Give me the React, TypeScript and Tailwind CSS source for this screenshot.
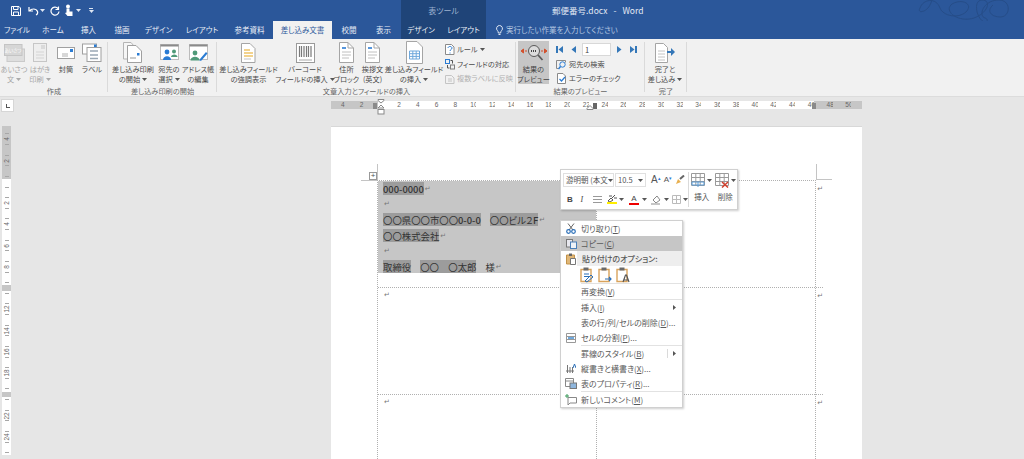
import type { ReactNode } from "react"

const FONT = "font-['Noto_Sans_CJK_JP','Noto_Sans',sans-serif] [font-feature-settings:'palt']"

function Svg({ w, h, children }: { w: number; h: number; children: ReactNode }) {
  return (
    <svg width={w} height={h} viewBox={`0 0 ${w} ${h}`} fill="none" className="shrink-0">
      {children}
    </svg>
  )
}

function Caret({ color = "#555" }: { color?: string }) {
  return (
    <svg width="5" height="3" viewBox="0 0 5 3" className="shrink-0">
      <path d="M0 0h5L2.5 3z" fill={color} />
    </svg>
  )
}

function DocIcon({ accent = "#2b7cd3" }: { accent?: string }) {
  return (
    <Svg w={15} h={21}>
      <path d="M.5 .5H9L14.500 6V20.500H.5z" fill="#fff" stroke="#a5a5a5" />
      <path d="M9 .5V6H14.500" stroke="#a5a5a5" />
      <path d="M3 6h4" stroke={accent} strokeWidth="1.600" />
      <path d="M3 10h9M3 13h9M3 16h7" stroke="#c0c0c0" />
    </Svg>
  )
}

const ribbonIcons: Record<string, ReactNode> = {
  greet: (
    <Svg w={21} h={18}>
      <rect x="3" y="5" width="17.500" height="12.500" fill="#dedede" stroke="#cacaca" />
      <rect x=".5" y=".5" width="17.500" height="11" fill="#d6d6d6" stroke="#c4c4c4" />
      <text x="9" y="8" textAnchor="middle" fontSize="4.500" fill="#fff">あいさつ</text>
    </Svg>
  ),
  card: (
    <Svg w={14} h={19}>
      <rect x=".5" y=".5" width="13" height="18" fill="#eeeeee" stroke="#c6c6c6" />
      <rect x="8" y="2" width="4" height="4" fill="#dadada" />
      <path d="M3 9h8M3 12h8M3 15h8" stroke="#d4d4d4" />
    </Svg>
  ),
  envelope: (
    <Svg w={18} h={12}>
      <rect x=".5" y=".5" width="17" height="11" fill="#fff" stroke="#a0a0a0" />
      <rect x="13" y="2" width="3" height="3" fill="#2b7cd3" />
      <path d="M5 7h6M5 9h6" stroke="#b0b0b0" />
    </Svg>
  ),
  label: (
    <Svg w={20} h={19}>
      <rect x=".5" y="1" width="14" height="10" fill="#fff" stroke="#a0a0a0" />
      <rect x="5" y="4.500" width="14" height="14" fill="#fff" stroke="#a0a0a0" />
      <rect x="12" y="1.500" width="2.500" height="2.500" fill="#2b7cd3" />
      <path d="M8 8h8M8 12h8M8 15.500h8" stroke="#9aa8b5" strokeWidth="1.400" />
    </Svg>
  ),
  merge: (
    <Svg w={20} h={21}>
      <path d="M.5 .5H8L11 4V17H.5z" fill="#f6f6f6" stroke="#b5b5b5" />
      <path d="M4.500 3.500H13L18.500 9V20.500H4.500z" fill="#fff" stroke="#a0a0a0" />
      <rect x="14" y="11" width="2.500" height="2.500" fill="#2b7cd3" />
      <path d="M7 16h6" stroke="#b5b5b5" strokeWidth="1.400" />
    </Svg>
  ),
  people: (
    <Svg w={19} h={17}>
      <rect x=".5" y=".5" width="18" height="15" fill="#fff" stroke="#bcbcbc" />
      <path d="M.5 1.500h18" stroke="#8a8a8a" strokeWidth="2" />
      <circle cx="7" cy="8" r="2.400" fill="#2b7cd3" />
      <path d="M3 16c0-5 8-5 8 0z" fill="#2b7cd3" />
      <circle cx="14" cy="7.500" r="2" fill="#4f9a78" />
      <path d="M11 13c0-3.500 6.500-3.500 6.500 0z" fill="#4f9a78" />
    </Svg>
  ),
  address: (
    <Svg w={19} h={17}>
      <rect x=".5" y=".5" width="18" height="15" fill="#fff" stroke="#bcbcbc" />
      <path d="M.5 1.500h18" stroke="#8a8a8a" strokeWidth="2" />
      <circle cx="6" cy="9" r="2.400" fill="#4f9a78" />
      <path d="M1.500 16.500c0-5 9-5 9 0z" fill="#4f9a78" />
      <path d="M11 15l6-7 1.500 1.500-6 7-2 .5z" fill="#2b7cd3" />
    </Svg>
  ),
  highlight: (
    <Svg w={15} h={20}>
      <path d="M.5 .5H9L14 5.500V19.500H.5z" fill="#fff" stroke="#a5a5a5" />
      <path d="M3 7h6M3 10h9M3 13h9" stroke="#eec468" strokeWidth="1.400" />
      <path d="M3 16h7" stroke="#c4c4c4" />
    </Svg>
  ),
  barcode: (
    <Svg w={19} h={20}>
      <rect x=".5" y=".5" width="18" height="19" fill="#fff" stroke="#9a9a9a" />
      <path d="M3.500 3v11M5.500 3v11M8 3v11M10.500 3v11M12.500 3v11M15 3v11" stroke="#7a7a7a" strokeWidth="1.200" />
      <path d="M3 17h13" stroke="#a8a8a8" />
    </Svg>
  ),
  block: <DocIcon />,
  greeting: <DocIcon />,
  insertField: (
    <Svg w={17} h={23}>
      <path d="M.5 .5H11L16.500 6V22.500H.5z" fill="#fff" stroke="#a5a5a5" />
      <path d="M3.500 10h10v8h-10zM3.500 12.700h10M3.500 15.400h10M6.800 10v8M10.200 10v8" stroke="#6fa8dc" />
    </Svg>
  ),
  preview: (
    <Svg w={26} h={18}>
      <path d="M0 7l2.500-2v4zM26 7l-2.500-2v4zM4 7h2M20 7h2" fill="#d2502d" stroke="#d2502d" />
      <circle cx="13" cy="7" r="5.500" fill="#dcdcdc" stroke="#5a5a5a" />
      <path d="M10 7h6" stroke="#444" strokeDasharray="1 1" strokeWidth="2" />
      <path d="M17 11l4.500 5" stroke="#5a5a5a" strokeWidth="1.800" />
    </Svg>
  ),
  finish: (
    <Svg w={20} h={20}>
      <path d="M.5 .5H8.500L12.500 4.500V19.500H.5z" fill="#fff" stroke="#a5a5a5" />
      <path d="M3 8h7M3 11h7M3 14h7M3 17h7" stroke="#c4c4c4" />
      <path d="M12 8h4V5l4 4-4 4v-3h-4z" fill="#3477b8" />
    </Svg>
  ),
}

function RibbonButton({ icon, lines, width, caret, disabled, ml }: { icon: string; lines: string[]; width: string; caret?: boolean; disabled?: boolean; ml?: string }) {
  const text = disabled ? "text-[#a8a8a8]" : "text-[#4a4a4a]"
  return (
    <div className={`flex flex-col items-center shrink-0 ${width} ${ml ?? ""}`}>
      <div className="h-[23px] flex items-center justify-center">{ribbonIcons[icon]}</div>
      {lines.map((l, i) => (
        <div key={l} className={`h-[10px] leading-[10px] text-[7.200px] whitespace-nowrap flex items-center gap-[2px] ${text}`}>
          {l}
          {caret && i === lines.length - 1 && <Caret color={disabled ? "#aaa" : "#555"} />}
        </div>
      ))}
    </div>
  )
}

function Group({ label, width, children }: { label: string; width: string; children: ReactNode }) {
  return (
    <div className={`relative shrink-0 h-full flex flex-col ${width}`}>
      <div className="flex h-[47px] pt-[2px]">{children}</div>
      <div className="text-center text-[7.200px] leading-[10px] text-[#666] whitespace-nowrap">{label}</div>
      <div className="absolute right-0 top-[3px] bottom-[4px] w-px bg-[#dadada]" />
    </div>
  )
}

function SmallRow({ icon, label, disabled, caret }: { icon: ReactNode; label: string; disabled?: boolean; caret?: boolean }) {
  return (
    <div className={`flex items-center gap-[2px] h-[15px] text-[7.200px] whitespace-nowrap ${disabled ? "text-[#b0b0b0]" : "text-[#4a4a4a]"}`}>
      {icon}
      {label}
      {caret && <Caret />}
    </div>
  )
}

function TitleBar() {
  return (
    <div className="flex h-[21px] bg-[#2b579a] text-[#d9e2f0] relative overflow-hidden">
      <div className="w-[401px] flex items-center shrink-0">
        <div className="ml-[11px]">
          <Svg w={10} h={10}>
            <path d="M.5 .5h7.500l1.500 1.500v7.500h-9z" stroke="#fff" />
            <path d="M2.500 .5v3h4.500v-3M2.500 9.500v-3.500h5v3.500" stroke="#fff" />
          </Svg>
        </div>
        <div className="ml-[7px]">
          <Svg w={11} h={10}>
            <path d="M1 1v4h4M1.500 5C3 2.500 8 2 9.500 5.500 10 7 9 8.500 8 9" stroke="#fff" strokeWidth="1.200" />
          </Svg>
        </div>
        <div className="ml-[1px]"><Caret color="#dfe7f3" /></div>
        <div className="ml-[5px]">
          <Svg w={10} h={10}>
            <path d="M8 2.500A4 4 0 1 0 9 5.500M8.500 .5v3h-3" stroke="#fff" strokeWidth="1.200" />
          </Svg>
        </div>
        <div className="ml-[4px]">
          <Svg w={9} h={13}>
            <circle cx="4" cy="2.500" r="2" fill="#fff" />
            <path d="M2.500 4.500h3v3h3v4.500h-5L1 9l1.500-.5z" fill="#fff" />
          </Svg>
        </div>
        <div className="ml-[3px]"><Caret color="#dfe7f3" /></div>
        <div className="ml-[8px] flex flex-col gap-[1px]">
          <div className="w-[4px] h-px bg-[#dfe7f3]" />
          <Caret color="#dfe7f3" />
        </div>
      </div>
      <div className="w-[85px] shrink-0 bg-[#1f4478] flex items-center justify-center text-[8px] text-[#9db2d0]">表ツール</div>
      <div className="ml-[66px] flex items-center gap-[6px] text-[8.500px] text-[#e2e9f4] whitespace-nowrap">
        <span>郵便番号.docx</span><span>-</span><span>Word</span>
      </div>
      <div className="absolute right-0 top-0">
        <svg width="112" height="28" viewBox="0 0 112 28" fill="none" stroke="#264d88" strokeWidth="1">
          <path d="M8 8c3-9 16-11 20 0 3 8 18 11 26 4 8-8-4-14-14-8-9 7 6 19 22 14 14-5 18-18 8-18-9 0-6 18 2 22 3 2 5-3 1-4-7-2-2-18 14-18 12 0 12 16 2 17-10 0-15-6-8-12" />
          <path d="M8 8c-2 4 1 4 4 3 4-2 6-5 8-11" />
        </svg>
      </div>
    </div>
  )
}

const TABS: [string, string][] = [
  ["ファイル", "w-[34px]"],
  ["ホーム", "w-[38px]"],
  ["挿入", "w-[33px]"],
  ["描画", "w-[34px]"],
  ["デザイン", "w-[39px]"],
  ["レイアウト", "w-[48px]"],
  ["参考資料", "w-[47px]"],
]

function TabBar() {
  return (
    <div className="flex h-[18px] bg-[#2b579a] text-[7.500px] text-[#e8edf6]">
      {TABS.map(([name, w]) => (
        <div key={name} className={`${w} flex items-center justify-center shrink-0`}>{name}</div>
      ))}
      <div className="w-[59px] shrink-0 bg-[#f1f1f1] text-[#2b579a] flex items-center justify-center">差し込み文書</div>
      <div className="w-[34px] shrink-0 flex items-center justify-center">校閲</div>
      <div className="w-[35px] shrink-0 flex items-center justify-center">表示</div>
      <div className="w-[85px] shrink-0 flex bg-[#1f4478]">
        <div className="w-[40px] flex items-center justify-center">デザイン</div>
        <div className="w-[45px] flex items-center justify-center">レイアウト</div>
      </div>
      <div className="ml-[10px] flex items-center gap-[3px] text-[#b4c6e0]">
        <Svg w={7} h={11}>
          <path d="M3.500 .5a3 3 0 0 1 2 5.200c-.7.7-.8 1.300-.8 2.300h-2.400c0-1-.1-1.600-.8-2.300a3 3 0 0 1 2-5.200zM2.500 9.500h2" stroke="#dfe7f3" />
        </Svg>
        実行したい作業を入力してください
      </div>
    </div>
  )
}

function NavArrow({ dir, bar }: { dir: "l" | "r"; bar?: boolean }) {
  return (
    <Svg w={8} h={9}>
      {dir === "l" ? (
        <>
          <path d="M7 1v7L2.500 4.500z" fill="#3477b8" />
          {bar && <path d="M1 1v7" stroke="#3477b8" strokeWidth="2" />}
        </>
      ) : (
        <>
          <path d="M1 1v7l4.500-3.500z" fill="#3477b8" />
          {bar && <path d="M7 1v7" stroke="#3477b8" strokeWidth="2" />}
        </>
      )}
    </Svg>
  )
}

function Ribbon() {
  return (
    <div className="flex h-[58px] bg-[#f1f1f1] border-b border-[#dcdcdc] shrink-0">
      <Group label="作成" width="w-[108px]">
        <RibbonButton icon="greet" lines={["あいさつ", "文"]} width="w-[26px]" caret disabled ml="ml-[1px]" />
        <RibbonButton icon="card" lines={["はがき", "印刷"]} width="w-[26px]" caret disabled />
        <RibbonButton icon="envelope" lines={["封筒"]} width="w-[26px]" />
        <RibbonButton icon="label" lines={["ラベル"]} width="w-[26px]" />
      </Group>
      <Group label="差し込み印刷の開始" width="w-[109px]">
        <RibbonButton icon="merge" lines={["差し込み印刷", "の開始"]} width="w-[44px]" caret ml="ml-[3px]" />
        <RibbonButton icon="people" lines={["宛先の", "選択"]} width="w-[28px]" caret />
        <RibbonButton icon="address" lines={["アドレス帳", "の編集"]} width="w-[30px]" />
      </Group>
      <Group label="文章入力とフィールドの挿入" width="w-[299px]">
        <RibbonButton icon="highlight" lines={["差し込みフィールド", "の強調表示"]} width="w-[57px]" ml="ml-[3px]" />
        <RibbonButton icon="barcode" lines={["バーコード", "フィールドの挿入"]} width="w-[56px]" caret />
        <RibbonButton icon="block" lines={["住所", "ブロック"]} width="w-[27px]" />
        <RibbonButton icon="greeting" lines={["挨拶文", "(英文)"]} width="w-[25px]" />
        <RibbonButton icon="insertField" lines={["差し込みフィールド", "の挿入"]} width="w-[58px]" caret />
        <div className="ml-[2px] flex flex-col pt-[1px]">
          <SmallRow
            label="ルール"
            caret
            icon={
              <Svg w={10} h={11}>
                <path d="M.5 .5h6l2.500 2.500v7.500h-8.500z" fill="#fff" stroke="#8a8a8a" />
                <path d="M3 4c0-2 4-2 4 0 0 1.500-2 1.500-2 3M5 8.500v1" stroke="#2b7cd3" />
              </Svg>
            }
          />
          <SmallRow
            label="フィールドの対応"
            icon={
              <Svg w={10} h={11}>
                <rect x=".5" y=".5" width="4" height="4" stroke="#2b7cd3" />
                <rect x="5.500" y="6" width="4" height="4" stroke="#7d7d7d" />
                <path d="M2.500 6v3h2M7.500 4.500v-3h-2" stroke="#555" />
              </Svg>
            }
          />
          <SmallRow
            label="複数ラベルに反映"
            disabled
            icon={
              <Svg w={10} h={11}>
                <path d="M.5 2.500h6l2.500 2.500v5.500h-8.500z" stroke="#c4c4c4" />
                <path d="M3 6h4M3 8h4" stroke="#c4c4c4" />
              </Svg>
            }
          />
        </div>
      </Group>
      <Group label="結果のプレビュー" width="w-[129px]">
        <div className="ml-[2px] w-[31px] h-[43px] bg-[#c6c6c6] flex flex-col items-center shrink-0 text-[7.200px] leading-[10px] text-[#444] whitespace-nowrap">
          <div className="h-[23px] shrink-0 flex items-center">{ribbonIcons.preview}</div>
          <div>結果の</div>
          <div>プレビュー</div>
        </div>
        <div className="ml-[7px] flex flex-col pt-[1px]">
          <div className="flex items-center h-[15px] gap-[5px]">
            <NavArrow dir="l" bar />
            <NavArrow dir="l" />
            <div className="w-[29px] h-[13px] bg-white border border-[#d8d8d8] text-[7.500px] leading-[11px] pl-[2px] text-[#444]">1</div>
            <NavArrow dir="r" />
            <NavArrow dir="r" bar />
          </div>
          <SmallRow
            label="宛先の検索"
            icon={
              <Svg w={11} h={11}>
                <path d="M.5 1.500h9v2" stroke="#8a8a8a" />
                <path d="M.5 1.500v8h2" stroke="#8a8a8a" />
                <circle cx="6.500" cy="5.500" r="2.700" stroke="#2b7cd3" />
                <path d="M4.500 7.500l-2 2.500" stroke="#2b7cd3" strokeWidth="1.400" />
              </Svg>
            }
          />
          <SmallRow
            label="エラーのチェック"
            icon={
              <Svg w={11} h={11}>
                <path d="M1.500 .5h5.500l2.500 2.500v7.500h-8z" fill="#fff" stroke="#8a8a8a" />
                <path d="M3.500 6l2 2 3.500-4" stroke="#2b7cd3" strokeWidth="1.200" />
              </Svg>
            }
          />
        </div>
      </Group>
      <Group label="完了" width="w-[42px]">
        <RibbonButton icon="finish" lines={["完了と", "差し込み"]} width="w-[40px]" caret />
      </Group>
    </div>
  )
}

// 4.7px per slot, 4 slots per labelled step; slot 10 is the zero point
const H_SLOTS = Array.from({ length: 114 }, (_, i) => i - 10)

function HorizontalRuler() {
  return (
    <div className="relative ml-[331px] mt-[4px] w-[531px] h-[8px]">
      <div className="flex h-full overflow-hidden">
        {H_SLOTS.map((k) => {
          const grey = k < 0 || k >= 93
          const num = k % 4 === 0 && k !== 0 ? Math.abs(k) / 2 : null
          return (
            <div key={k} className={`w-[4.700px] h-full shrink-0 flex items-center justify-center ${grey ? "bg-[#c6c6c6]" : "bg-white"}`}>
              {num !== null && (
                <span className="text-[6.500px] text-[#666] font-['Liberation_Sans',sans-serif]">{num}</span>
              )}
            </div>
          )
        })}
      </div>
      <div className="absolute left-[42px] top-[2px] w-[4px] h-[6px] bg-[#8a8a8a]" />
      <div className="absolute left-[262px] top-[2px] w-[4px] h-[6px] bg-[#666]" />
      <div className="absolute left-[481px] top-[2px] w-[4px] h-[6px] bg-[#8a8a8a]" />
      <svg className="absolute left-[46px] -top-[2px]" width="9" height="17" viewBox="0 0 9 17" fill="#fff" stroke="#888">
        <path d="M1 .5h6v1L4 4 1 1.500z" />
        <path d="M4 6l3 3H1z" />
        <rect x="1" y="10.500" width="6" height="4.500" />
      </svg>
      <svg className="absolute left-[255px] top-[4px]" width="8" height="5" viewBox="0 0 8 5" fill="#fff" stroke="#888">
        <path d="M4 .5l3 3v1H1v-1z" />
      </svg>
    </div>
  )
}

const V_SLOTS = Array.from({ length: 62 }, (_, i) => i - 10)

function VerticalRuler() {
  return (
    <div className="ml-[2px] w-[9px] shrink-0 flex flex-col overflow-hidden">
      {V_SLOTS.map((k) => {
        const grey = k < 0
        const slot = k === 20 || k === 40
        const odd = Math.abs(k) % 2 === 1
        return (
          <div key={k} className={`h-[5.325px] shrink-0 flex items-center justify-center ${slot || grey ? "bg-[#c6c6c6]" : "bg-white"}`}>
            {k % 4 === 0 && k !== 0 && !slot ? (
              <span className="text-[6.500px] leading-[6px] text-[#666] -rotate-90 font-['Liberation_Sans',sans-serif]">{Math.abs(k) / 2}</span>
            ) : odd ? (
              <div className="w-[4px] h-px bg-[#a8a8a8]" />
            ) : null}
          </div>
        )
      })}
    </div>
  )
}

function Ret() {
  return <span className="text-[7px] leading-[12px] text-[#777] font-['DejaVu_Sans',sans-serif] ml-px">↵</span>
}

function Mark({ children }: { children: ReactNode }) {
  return <span className="inline-flex items-center h-[13px] bg-[#9c9c9c]">{children}</span>
}

function DocLine({ children }: { children?: ReactNode }) {
  return <div className="h-[15.600px] flex items-center whitespace-pre text-[9.400px] text-[#333]">{children}</div>
}

function Page() {
  return (
    <div className="ml-[320px] w-[531px] h-[340px] bg-white border-t border-[#d8d8d8] shrink-0 relative">
      <div className="absolute left-[46px] top-[37px] w-px h-[16px] bg-[#c4c4c4]" />
      <div className="absolute left-[30px] top-[53px] w-[16px] h-px bg-[#c4c4c4]" />
      <div className="absolute left-[485px] top-[37px] w-px h-[15px] bg-[#c4c4c4]" />
      <div className="absolute left-[485px] top-[52px] w-[16px] h-px bg-[#c4c4c4]" />
      <div className="absolute left-[38px] top-[45px] w-[8px] h-[8px] bg-white border border-[#999] flex items-center justify-center text-[8px] leading-[6px] text-[#555] font-['Liberation_Sans',sans-serif]">+</div>
      <div className="ml-[46px] mt-[53px] w-[439px] grid grid-cols-[219px_220px] grid-rows-[107px_107px_130px] border-l border-t border-r border-dotted border-[#b0b0b0]">
        <div className="border-b border-r border-dotted border-[#b0b0b0]">
          <div className="h-[92px] bg-[#c6c6c6] pl-[5px]">
            <DocLine><span className="font-medium"><Mark>000-0000</Mark></span><Ret /></DocLine>
            <DocLine><Ret /></DocLine>
            <DocLine>
              <Mark>〇〇県〇〇市〇〇<b className="font-medium">0-0-0</b></Mark>
              <span className="ml-[9px]"><Mark>〇〇ビル２<b className="font-medium">F</b></Mark></span>
              <Ret />
            </DocLine>
            <DocLine><Mark>〇〇株式会社</Mark><Ret /></DocLine>
            <DocLine><Ret /></DocLine>
            <DocLine>
              <Mark>取締役</Mark>
              <span className="ml-[9px]"><Mark>〇〇　〇太郎</Mark></span>
              <span className="ml-[9px]">様</span>
              <Ret />
            </DocLine>
          </div>
        </div>
        <div className="border-b border-dotted border-[#b0b0b0] flex justify-end -mr-[6px] pt-[2px]"><Ret /></div>
        <div className="border-b border-r border-dotted border-[#b0b0b0] pl-[5px] flex items-start pt-[1px]"><Ret /></div>
        <div className="border-b border-dotted border-[#b0b0b0] flex justify-end -mr-[6px] pt-[2px]"><Ret /></div>
        <div className="border-r border-dotted border-[#b0b0b0] pl-[5px] flex items-start pt-[1px]"><Ret /></div>
        <div className="flex justify-end -mr-[6px] pt-[2px]"><Ret /></div>
      </div>
    </div>
  )
}

function TableGridIcon({ del }: { del?: boolean }) {
  return (
    <Svg w={15} h={15}>
      <path d="M.5 .5h13v12H.5zM.5 4.500h13M.5 8.500h13M4.800 .5v12M9.200 .5v12" stroke="#9a9a9a" />
      {del ? <path d="M7 9l6 5.500M13 9l-6 5.500" stroke="#d2402d" strokeWidth="1.500" /> : <path d="M1 9h12v3H1zM7 9v5" stroke="#5b9bd5" />}
    </Svg>
  )
}

function MiniToolbar() {
  return (
    <div className="absolute left-[560px] top-[169px] w-[178px] h-[41px] bg-white border border-[#d0d0d0] shadow-[1px_1px_2px_rgba(0,0,0,0.2)] flex text-[#555] text-[7.500px]">
      <div className="w-[127px] flex flex-col pl-[2px] pt-[3px] shrink-0">
        <div className="flex items-center">
          <div className="w-[51px] h-[14px] border border-[#e0e0e0] flex items-center justify-between px-[2px] whitespace-nowrap">
            游明朝 (本文<Caret />
          </div>
          <div className="w-[31px] h-[14px] ml-px border border-[#e0e0e0] flex items-center justify-between px-[2px]">
            10.5<Caret />
          </div>
          <span className="ml-[5px] text-[10px] leading-none text-[#555] font-['Liberation_Sans',sans-serif]">A</span>
          <span className="text-[5px] leading-none text-[#2b7cd3] -mt-[5px]">▴</span>
          <span className="ml-[3px] text-[8px] leading-none text-[#555] font-['Liberation_Sans',sans-serif]">A</span>
          <span className="text-[5px] leading-none text-[#2b7cd3] -mt-[5px]">▾</span>
          <div className="ml-[3px]">
            <Svg w={10} h={10}>
              <path d="M1 9l2-5 3 3z" fill="#e8b050" />
              <path d="M5 4l4-3.500" stroke="#666" strokeWidth="2" />
            </Svg>
          </div>
        </div>
        <div className="flex items-center h-[19px] mt-[3px] pl-[4px] text-[#444] font-['Liberation_Sans',sans-serif]">
          <b className="w-[14px] text-[8px]">B</b>
          <i className="w-[13px] text-[8px] font-['Liberation_Serif',serif]">I</i>
          <Svg w={9} h={7}>
            <path d="M0 .5h9M0 3.500h9M0 6.500h9" stroke="#999" />
          </Svg>
          <div className="ml-[5px] flex items-center gap-[2px]">
            <div className="flex flex-col items-center">
              <Svg w={10} h={7}>
                <path d="M1 6l3-3 2 2-3 2zM5 3l3-3M2 1h3M7 3h3" stroke="#555" />
              </Svg>
              <div className="w-[10px] h-[2px] bg-[#ffee00]" />
            </div>
            <Caret />
          </div>
          <div className="ml-[5px] flex items-center gap-[3px]">
            <div className="flex flex-col items-center">
              <span className="text-[8px] leading-[8px]">A</span>
              <div className="w-[10px] h-[2px] bg-[#e00]" />
            </div>
            <Caret />
          </div>
          <div className="ml-[4px] flex items-center gap-[2px]">
            <Svg w={11} h={10}>
              <path d="M2 5l4-4 3 4-4 3z" stroke="#888" />
              <path d="M0 9h9" stroke="#c6c6c6" strokeWidth="2" />
            </Svg>
            <Caret />
          </div>
          <div className="ml-[3px] flex items-center gap-[2px]">
            <Svg w={9} h={9}>
              <path d="M.5 .5h8v8h-8zM.5 4.500h8M4.500 .5v8" stroke="#bbb" />
            </Svg>
            <Caret />
          </div>
        </div>
      </div>
      <div className="w-px my-[2px] bg-[#dadada] shrink-0" />
      <div className="flex flex-col items-center w-[24px] ml-[1px] pt-[3px]">
        <div className="flex items-center gap-[1px]"><TableGridIcon /><Caret /></div>
        <div className="mt-[4px] leading-[10px]">挿入</div>
      </div>
      <div className="flex flex-col items-center w-[24px] pt-[3px]">
        <div className="flex items-center gap-[1px]"><TableGridIcon del /><Caret /></div>
        <div className="mt-[4px] leading-[10px]">削除</div>
      </div>
    </div>
  )
}

function MenuRow({ label, icon, active, arrow, divider }: { label: ReactNode; icon?: ReactNode; active?: boolean; arrow?: boolean; divider?: boolean }) {
  return (
    <div className={`flex items-center h-[15px] ${active ? "bg-[#c6c6c6]" : ""}`}>
      <div className="w-[20px] flex justify-center shrink-0">{icon}</div>
      <div className="w-[87px] whitespace-nowrap">{label}</div>
      {divider && <div className="w-px h-[9px] bg-[#dadada] -ml-[1px]" />}
      {arrow && (
        <svg width="3" height="5" viewBox="0 0 3 5" className="ml-[5px]">
          <path d="M0 0l3 2.500L0 5z" fill="#555" />
        </svg>
      )}
    </div>
  )
}

function MenuSep() {
  return <div className="h-px ml-[20px] bg-[#e2e2e2]" />
}

function PasteIcon({ badge }: { badge: ReactNode }) {
  return (
    <Svg w={15} h={16}>
      <path d="M1 2.500h10v12H1z" stroke="#d9a35c" strokeWidth="1.400" fill="#fff" />
      <path d="M3.500 .5h5v3h-5z" fill="#6a6a6a" />
      {badge}
    </Svg>
  )
}

function U({ children }: { children: ReactNode }) {
  return <span className="underline">{children}</span>
}

function ContextMenu() {
  return (
    <div className="absolute left-[560px] top-[220px] w-[123px] h-[188px] bg-white border border-[#d0d0d0] shadow-[1px_1px_2px_rgba(0,0,0,0.2)] text-[8px] text-[#5a5a5a]">
      <MenuRow
        label={<>切り取り(<U>T</U>)</>}
        icon={
          <Svg w={10} h={11}>
            <path d="M2 .5l5 6.500M8 .5L3 7" stroke="#666" />
            <circle cx="2.500" cy="8.500" r="1.800" stroke="#2b6fb8" strokeWidth="1.200" />
            <circle cx="7.500" cy="8.500" r="1.800" stroke="#2b6fb8" strokeWidth="1.200" />
          </Svg>
        }
      />
      <MenuRow
        active
        label={<>コピー(<U>C</U>)</>}
        icon={
          <Svg w={11} h={10}>
            <rect x=".5" y=".5" width="6" height="7.500" stroke="#777" fill="#e8e8ee" />
            <rect x="4.500" y="3" width="6" height="6.500" stroke="#4a7fb8" fill="#eef2f7" />
          </Svg>
        }
      />
      <div className="flex items-center h-[15px]">
        <div className="w-[15px] flex justify-center shrink-0 ml-[2px]">
          <Svg w={10} h={12}>
            <path d="M.5 2h8v9h-8z" fill="#e0b778" stroke="#c29249" />
            <path d="M3 .5h3v2.500H3z" fill="#666" />
            <path d="M4.500 5.500h5v6h-5z" fill="#fff" stroke="#777" />
          </Svg>
        </div>
        <div className="ml-[-1px] flex-1 h-full bg-[#eeeeee] flex items-center pl-[5px] font-medium whitespace-nowrap">貼り付けのオプション:</div>
      </div>
      <div className="h-[17px] pl-[19px] flex items-center gap-[3px]">
        <PasteIcon badge={<path d="M4 7h5M4 9.500h5M5 14l6-6 2 2-6 5z" stroke="#2b6fb8" />} />
        <PasteIcon badge={<path d="M7 12h6M11 10l2 2-2 2" stroke="#2b6fb8" strokeWidth="1.200" />} />
        <PasteIcon badge={<path d="M7 15l2.500-7h1l2.500 7M8 13h4" stroke="#555" strokeWidth="1.200" />} />
      </div>
      <MenuSep />
      <MenuRow label={<>再変換(<U>V</U>)</>} />
      <MenuSep />
      <MenuRow arrow label={<>挿入(<U>I</U>)</>} />
      <MenuRow label={<>表の行/列/セルの削除(<U>D</U>)...</>} />
      <MenuRow
        label={<>セルの分割(<U>P</U>)...</>}
        icon={
          <Svg w={10} h={10}>
            <path d="M.5 .5h9v9h-9zM.5 3.500h9M.5 6.500h9" stroke="#999" />
            <path d="M2 5h6" stroke="#6fa8dc" strokeWidth="2" />
          </Svg>
        }
      />
      <MenuSep />
      <MenuRow divider arrow label={<>罫線のスタイル(<U>B</U>)</>} />
      <MenuRow
        label={<>縦書きと横書き(<U>X</U>)...</>}
        icon={
          <Svg w={10} h={11}>
            <path d="M1.500 2v8M4 4v6M6.500 4v6M0 8h8" stroke="#777" />
            <path d="M7 5l1.500-4L10 5" stroke="#2b6fb8" />
          </Svg>
        }
      />
      <MenuRow
        label={<>表のプロパティ(<U>R</U>)...</>}
        icon={
          <Svg w={12} h={11}>
            <path d="M.5 .5h8v8h-8zM.5 3h8" stroke="#888" />
            <rect x="5" y="5" width="6.500" height="5.500" fill="#8fb6dd" stroke="#777" />
          </Svg>
        }
      />
      <MenuSep />
      <MenuRow
        label={<>新しいコメント(<U>M</U>)</>}
        icon={
          <Svg w={12} h={11}>
            <path d="M3 3.500h8.500v5.500H5l-2 2z" stroke="#888" fill="#fff" />
            <path d="M0 2h4M2 0v4" stroke="#3a9a5b" />
          </Svg>
        }
      />
    </div>
  )
}

export default function App() {
  return (
    <div className={`relative w-[1024px] h-[459px] overflow-hidden bg-[#e6e6e6] flex flex-col ${FONT}`}>
      <TitleBar />
      <TabBar />
      <Ribbon />
      <div className="relative h-[29px] shrink-0">
        <div className="absolute left-[1px] top-[2px] w-[13px] h-[13px] bg-white border border-[#d6d6d6] flex items-end justify-center pb-[3px]">
          <div className="w-[4px] h-[4px] border-l border-b border-[#555]" />
        </div>
        <HorizontalRuler />
      </div>
      <div className="flex flex-1 min-h-0">
        <VerticalRuler />
        <Page />
      </div>
      <MiniToolbar />
      <ContextMenu />
    </div>
  )
}
